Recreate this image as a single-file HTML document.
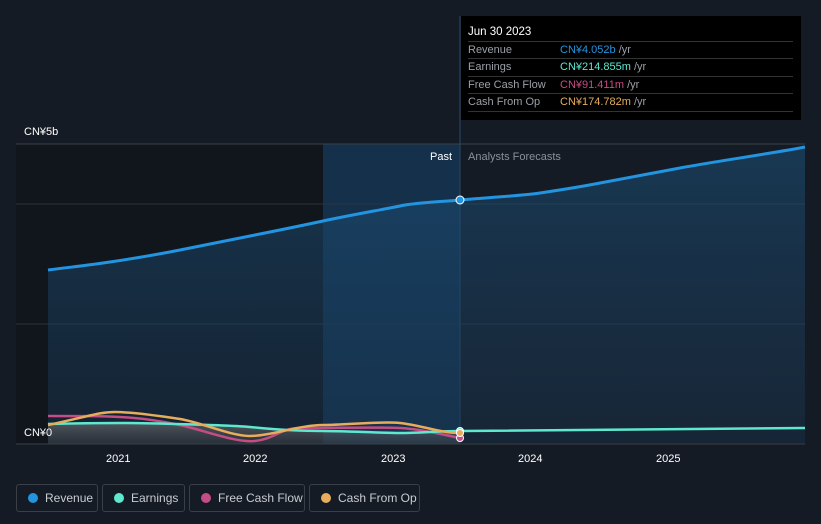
<!DOCTYPE html><html><head><style>
body{margin:0;background:#151b24;width:821px;height:524px;overflow:hidden;font-family:"Liberation Sans",sans-serif;}
.leg{position:absolute;top:484px;height:28px;border:1px solid #3a3f48;border-radius:3px;color:#c8ccd2;font-size:12px;line-height:26px;box-sizing:border-box;padding-left:28px}
.leg i{position:absolute;left:11px;top:8px;width:10px;height:10px;border-radius:50%}
.tt{position:absolute;left:461px;top:16px;width:340px;height:104px;background:#000;color:#fff;font-size:11px}
.tt div{position:absolute;left:7px;right:8px;height:17px;border-top:1px solid #333;line-height:17px;color:#9aa0a8}
.tt span{position:absolute;left:92px}
</style></head><body>
<svg width="821" height="524" style="position:absolute;left:0;top:0">
<defs><linearGradient id="g" x1="0" y1="0" x2="0" y2="1"><stop offset="0" stop-color="#1b4f78" stop-opacity=".8"/><stop offset="1" stop-color="#1a3550" stop-opacity=".6"/></linearGradient>
<linearGradient id="g2" x1="0" y1="0" x2="0" y2="1"><stop offset="0" stop-color="#777" stop-opacity=".6"/><stop offset="1" stop-color="#444" stop-opacity=".4"/></linearGradient></defs>
<rect x="16" y="144" width="307" height="300" fill="#11161d"/>
<rect x="323" y="144" width="137" height="300" fill="#14304a"/>
<line x1="16" y1="144" x2="805" y2="144" stroke="#3a4048"/>
<line x1="16" y1="204" x2="805" y2="204" stroke="#2c333c"/>
<line x1="16" y1="324" x2="805" y2="324" stroke="#2c333c"/>
<line x1="16" y1="444" x2="805" y2="444" stroke="#3a4048"/>
<line x1="460" y1="16" x2="460" y2="444" stroke="#2c4a66"/>
<path d="M48,270 C80,266 90,265 110,262 S160,254 180,250 S230,240 250,236 S300,226 323,221 S380,210 400,206 S440,202 460,200 S520,196 540,193 S580,187 600,183 S660,172 680,168 S780,152 805,147 L805,444 L48,444Z" fill="url(#g)" opacity=".7"/>
<path d="M48,424 L120,423 L250,427 L323,431 L400,433 L460,431 L460,444 L48,444Z" fill="url(#g2)"/>
<path d="M48,270 C80,266 90,265 110,262 S160,254 180,250 S230,240 250,236 S300,226 323,221 S380,210 400,206 S440,202 460,200 S520,196 540,193 S580,187 600,183 S660,172 680,168 S780,152 805,147" fill="none" stroke="#2394e0" stroke-width="3"/>
<path d="M48,416 C90,416 100,416 120,417 S160,421 180,425 S235,443 255,441 S280,428 300,428 S380,427 400,428 S440,434 460,438" fill="none" stroke="#c44d85" stroke-width="2.5"/>
<path d="M48,424 C90,423 100,423 120,423 S230,425 250,427 S300,431 323,431 S380,433 400,433 S440,431 460,431 L805,428" fill="none" stroke="#5ee8d0" stroke-width="2.5"/>
<path d="M48,425 C90,416 100,412 115,412 S160,416 180,419 S230,436 250,436 S300,425 323,425 S380,421 400,423 S440,433 460,433" fill="none" stroke="#e6ad5c" stroke-width="2.5"/>
<circle cx="460" cy="200" r="4" fill="#2394e0" stroke="#fff" stroke-width="1"/>
<circle cx="460" cy="438" r="3.5" fill="#c44d85" stroke="#fff" stroke-width="1"/>
<circle cx="460" cy="431" r="3.5" fill="#5ee8d0" stroke="#fff" stroke-width="1"/>
<circle cx="460" cy="433" r="3.5" fill="#e6ad5c" stroke="#fff" stroke-width="1"/>
<g fill="#fff" font-size="11"><text x="24" y="135">CN¥5b</text><text x="24" y="436">CN¥0</text>
<text x="430" y="160">Past</text><text x="468" y="160" fill="#8a9099">Analysts Forecasts</text>
<text x="106" y="462">2021</text><text x="243" y="462">2022</text><text x="381" y="462">2023</text><text x="518" y="462">2024</text><text x="656" y="462">2025</text></g>
</svg>
<div class="tt"><div style="top:8px;border:none;color:#fff;font-size:11.5px">Jun 30 2023</div>
<div style="top:25px">Revenue<span style="color:#2394e0">CN¥4.052b <b style="font-weight:normal;color:#9aa0a8">/yr</b></span></div>
<div style="top:42px">Earnings<span style="color:#5ee8d0">CN¥214.855m <b style="font-weight:normal;color:#9aa0a8">/yr</b></span></div>
<div style="top:60px">Free Cash Flow<span style="color:#c44d85">CN¥91.411m <b style="font-weight:normal;color:#9aa0a8">/yr</b></span></div>
<div style="top:77px;border-bottom:1px solid #333">Cash From Op<span style="color:#e6ad5c">CN¥174.782m <b style="font-weight:normal;color:#9aa0a8">/yr</b></span></div></div>
<div class="leg" style="left:16px;width:82px"><i style="background:#2394e0"></i>Revenue</div>
<div class="leg" style="left:102px;width:83px"><i style="background:#5ee8d0"></i>Earnings</div>
<div class="leg" style="left:189px;width:116px"><i style="background:#c44d85"></i>Free Cash Flow</div>
<div class="leg" style="left:309px;width:111px"><i style="background:#e6ad5c"></i>Cash From Op</div>
</body></html>
